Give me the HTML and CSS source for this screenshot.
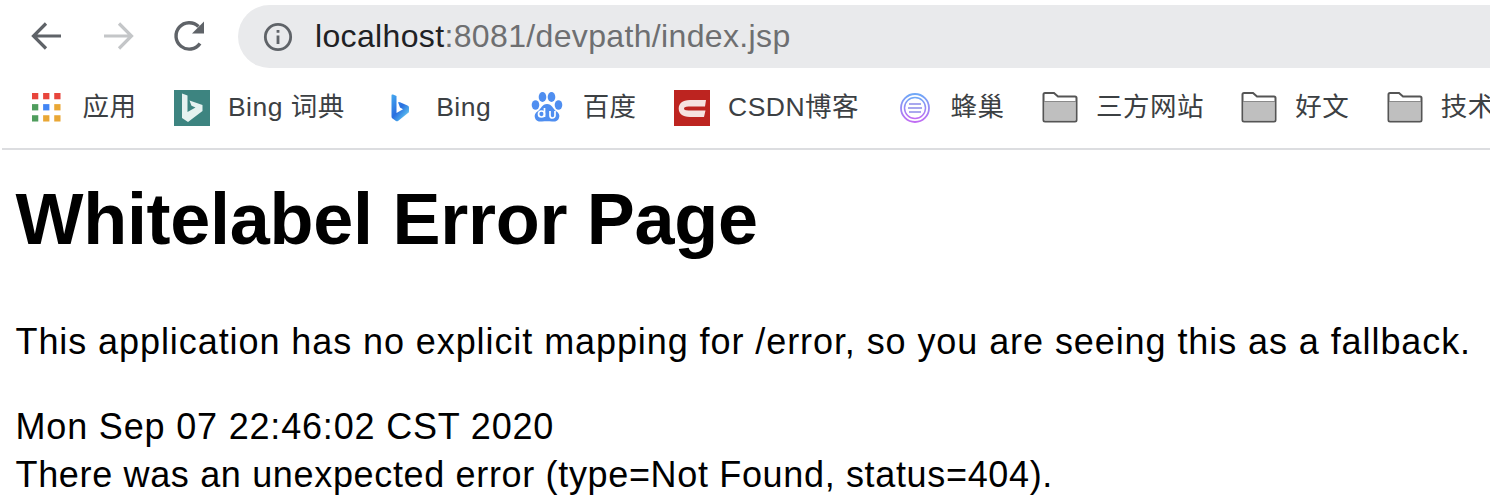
FILE: index.html
```
<!DOCTYPE html>
<html lang="zh">
<head>
<meta charset="utf-8">
<title>Whitelabel Error Page</title>
<link rel="stylesheet" href="styles.css">
</head>
<body>
<header class="chrome">
  <div class="toolbar">
    <div class="nav">
      <svg class="nav-icon" viewBox="0 0 36 36"><path d="M33 18H6M18 5.500 5.500 18 18 30.500" fill="none" stroke="#5f6368" stroke-width="3.200"/></svg>
      <svg class="nav-icon" viewBox="0 0 36 36"><path d="M4 18H31M19 5.500 31.500 18 19 30.500" fill="none" stroke="#c4c6c8" stroke-width="3.200"/></svg>
      <svg class="nav-icon" viewBox="0 0 36 36"><path d="M28 25.500A13.200 13.200 0 1 1 26.500 8.500" fill="none" stroke="#5f6368" stroke-width="3.400"/><path d="M32 3.500V15.500H20Z" fill="#5f6368"/></svg>
    </div>
    <div class="omnibox">
      <svg class="info" viewBox="0 0 32 32"><circle cx="16" cy="16" r="13.500" fill="none" stroke="#5f6368" stroke-width="3"/><path d="M14.500 14.500h3v9h-3zM14.500 8.500h3v3h-3z" fill="#5f6368"/></svg>
      <span class="url"><span class="host">localhost</span>:8081/devpath/index.jsp</span>
    </div>
  </div>
  <nav class="bookmarks">
    <a class="bm"><span class="ico"><svg class="apps" viewBox="0 0 30 30">
      <rect x="0" y="0" width="6.500" height="6.500" fill="#e8453c"/><rect x="11.500" y="0" width="6.500" height="6.500" fill="#e8453c"/><rect x="23" y="0" width="6.500" height="6.500" fill="#e8453c"/>
      <rect x="0" y="11.500" width="6.500" height="6.500" fill="#4f9d5d"/><rect x="11.500" y="11.500" width="6.500" height="6.500" fill="#4285f4"/><rect x="23" y="11.500" width="6.500" height="6.500" fill="#e9a735"/>
      <rect x="0" y="23" width="6.500" height="6.500" fill="#4f9d5d"/><rect x="11.500" y="23" width="6.500" height="6.500" fill="#e9a735"/><rect x="23" y="23" width="6.500" height="6.500" fill="#e9a735"/>
    </svg></span><span class="label">应用</span></a>
    <a class="bm"><span class="ico"><svg class="full" viewBox="0 0 36 36"><rect width="36" height="36" fill="#3d8480"/><path d="M8 3.500 13.500 5.500V22l8-4.500-4-1.800-2-5.200 13 4.500v6L14 32 8 28Z" fill="#e6f2f0"/></svg></span><span class="label">Bing 词典</span></a>
    <a class="bm"><span class="ico"><svg class="bing" viewBox="0 0 20 28"><defs><linearGradient id="bg" x1="0" y1="0" x2="0.800" y2="1"><stop offset="0" stop-color="#45a9ef"/><stop offset=".55" stop-color="#2a6fe0"/><stop offset=".8" stop-color="#4aa6ea"/><stop offset="1" stop-color="#8fdcf0"/></linearGradient></defs><path d="M1.500 1.500Q1.500 0 3 .6L6.500 2V19l6.500-3.700-3-1.800-1.800-4.700Q8 7.500 10 8.300L17.500 11.500Q19 12 19 13.500V17.500Q19 18.500 18 19L8 27Q7 27.500 6 27L2.500 24.500Q1.500 24 1.500 22.500Z" fill="url(#bg)"/></svg></span><span class="label">Bing</span></a>
    <a class="bm"><span class="ico"><svg class="full" viewBox="0 0 36 36">
      <g fill="#4f8ef0"><ellipse cx="6.500" cy="15" rx="3.800" ry="4.800"/><ellipse cx="13.500" cy="7" rx="3.800" ry="5"/><ellipse cx="22.500" cy="7" rx="3.800" ry="5"/><ellipse cx="29.500" cy="15" rx="3.800" ry="4.800"/><path d="M18 14c5 0 6 5 9 7 3 2 4 4 3 7-1 3-4 4-7 3.500-3-.5-7-.5-10 0-3 .5-6-.5-7-3.500-1-3 0-5 3-7 3-2 4-7 9-7Z"/></g>
      <path d="M15.500 18v9M21 21v4.500a2.500 2.500 0 0 0 5 0V21" fill="none" stroke="#fff" stroke-width="1.700"/><circle cx="12.500" cy="24" r="3" fill="none" stroke="#fff" stroke-width="1.700"/>
    </svg></span><span class="label">百度</span></a>
    <a class="bm"><span class="ico"><svg class="full" viewBox="0 0 36 36"><rect width="36" height="36" fill="#bd2420"/><path d="M32 10H16C8 10 4.700 14 4.700 18.500S8 27 16 27H30L31.500 20.500H14.500C11 20.500 10 19.500 10 18.500S11 16.500 14.500 16.500H31Z" fill="#f6e2e0"/></svg></span><span class="label">CSDN博客</span></a>
    <a class="bm"><span class="ico"><svg class="full" viewBox="0 0 36 36"><defs><linearGradient id="fc" x1="0" y1="0" x2="0" y2="1"><stop offset="0" stop-color="#6fa8f7"/><stop offset="1" stop-color="#c16cf3"/></linearGradient></defs><circle cx="18" cy="18" r="14" fill="none" stroke="url(#fc)" stroke-width="1.800"/><circle cx="18" cy="18" r="10.500" fill="none" stroke="url(#fc)" stroke-width="1.500"/><path d="M12 14h12M11 18h14M12 22h12" stroke="#a9a8ee" stroke-width="1.800"/></svg></span><span class="label">蜂巢</span></a>
    <a class="bm"><span class="ico"><svg class="full" viewBox="0 0 36 36"><use href="#folder"/></svg></span><span class="label">三方网站</span></a>
    <a class="bm"><span class="ico"><svg class="full" viewBox="0 0 36 36"><use href="#folder"/></svg></span><span class="label">好文</span></a>
    <a class="bm"><span class="ico"><svg class="full" viewBox="0 0 36 36"><use href="#folder"/></svg></span><span class="label">技术</span></a>
  </nav>
  <svg class="defs" width="0" height="0"><defs><g id="folder"><path d="M1.500 4.500Q1.500 3 3 3H12L16 6.500H33Q34.500 6.500 34.500 8V30Q34.500 31.500 33 31.500H3Q1.500 31.500 1.500 30Z" fill="#fff" stroke="#555" stroke-width="2"/><path d="M2.500 11.500H33.500V30.500H2.500Z" fill="#bfbfbf"/><path d="M2 11.500H34" stroke="#8a8a8a" stroke-width="1"/></g></defs></svg>
</header>
<main class="page">
  <h1>Whitelabel Error Page</h1>
  <p class="lead">This application has no explicit mapping for /error, so you are seeing this as a fallback.</p>
  <div class="details date">Mon Sep 07 22:46:02 CST 2020</div>
  <div class="details status">There was an unexpected error (type=Not Found, status=404).</div>
</main>
</body>
</html>
```
FILE: styles.css
```
html, body { margin: 0; padding: 0; background: #fff; }
body { width: 1490px; height: 500px; overflow: hidden; font-family: "Liberation Sans", "Noto Sans CJK SC", sans-serif; color: #000; }
.chrome { height: 148px; margin-left: 2px; border-bottom: 2px solid #dcdde0; position: relative; overflow: hidden; }
.toolbar { height: 72px; display: flex; align-items: center; }
.nav { display: flex; gap: 36px; padding-left: 26px; width: 236px; box-sizing: border-box; flex: none; }
.nav-icon { width: 36px; height: 36px; flex: none; }
.omnibox { flex: 1; height: 63px; margin-top: 1px; background: #e9eaec; border-radius: 32px 0 0 32px; display: flex; align-items: center; padding-left: 25px; }
.info { width: 30px; height: 30px; flex: none; margin-right: 22px; }
.url { font-size: 32px; letter-spacing: 0.350px; color: #6e6f71; }
.host { color: #202124; }
.bookmarks { height: 72px; display: flex; align-items: center; gap: 37.400px; padding-left: 26.500px; white-space: nowrap; }
.bm { display: flex; align-items: center; gap: 18px; font-size: 26.500px; color: #3c4043; letter-spacing: 0.500px; flex: none; }
.label { line-height: 32px; padding-bottom: 3px; }
.ico { width: 36px; height: 36px; display: flex; align-items: center; justify-content: center; flex: none; }
.full { width: 36px; height: 36px; }
.apps { width: 29px; height: 29px; margin-bottom: 1px; }
.bing { width: 20px; height: 28px; margin-bottom: 1px; }
.defs { position: absolute; }
.page { padding-left: 15.500px; }
h1 { margin: 30px 0 0; font-size: 72px; line-height: 78px; font-weight: 700; letter-spacing: -0.280px; }
.lead { margin: 60px 0 37px; font-size: 36px; line-height: 48px; letter-spacing: 0.920px; white-space: nowrap; }
.details { font-size: 36px; line-height: 48px; white-space: nowrap; }
.date { letter-spacing: 0.820px; }
.status { letter-spacing: 0.660px; }
```
